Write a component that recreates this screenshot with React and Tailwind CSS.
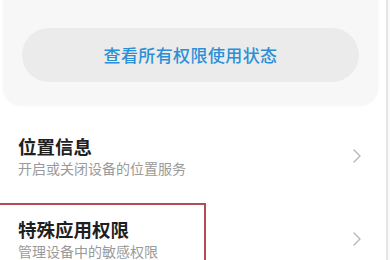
import React from 'react';

const Chevron = () => (
  <svg width="10" height="16" viewBox="0 0 10 16" fill="none">
    <polyline points="2,2 8,8 2,14" stroke="#b8b8b8" strokeWidth="1.4" strokeLinecap="round" strokeLinejoin="round" />
  </svg>
);

const rows = [
  { title: '位置信息', desc: '开启或关闭设备的位置服务' },
  { title: '特殊应用权限', desc: '管理设备中的敏感权限' },
];

const Row = ({ title, desc, className = '' }) => (
  <div className={`shrink-0 flex items-center justify-between pl-[18px] pr-[24px] ${className}`}>
    <div className="flex flex-col">
      <span className="text-[18.5px] leading-[24px] font-bold text-[#1f1f1f]">{title}</span>
      <span className="text-[14px] leading-[20px] text-[#9a9a9a]">{desc}</span>
    </div>
    <Chevron />
  </div>
);

export default function App() {
  return (
    <div
      className="relative flex w-[390px] h-[260px] overflow-hidden bg-white"
      style={{ fontFamily: '"Noto Sans CJK SC", "Noto Sans", sans-serif' }}
    >
      <div className="shrink-0 w-[386px] flex flex-col">
        <div className="shrink-0 mx-[3px] w-[375px] h-[105px] bg-[#f7f7f7] rounded-b-[18px] shadow-[0_1px_3px_rgba(0,0,0,0.04)] flex flex-col pt-[28px] px-[19px]">
          <div className="h-[54px] rounded-full bg-[#ebebeb] flex items-center justify-center">
            <span className="text-[17px] font-medium text-[#2b8fd6] tracking-[0.4px]">查看所有权限使用状态</span>
          </div>
        </div>
        <Row {...rows[0]} className="mt-[17px] pt-[12px] pb-[25px]" />
        <Row {...rows[1]} className="pt-[14px] pb-[20px]" />
      </div>
      <div className="shrink-0 w-[2px] bg-[#e6e6e6]" />
      <div className="flex-1 bg-[#fafafa]" />

      {/* annotation box */}
      <div className="absolute left-[-2px] top-[203px] w-[208px] h-[80px] border-[2.5px] border-[#b34a57]" />
    </div>
  );
}
